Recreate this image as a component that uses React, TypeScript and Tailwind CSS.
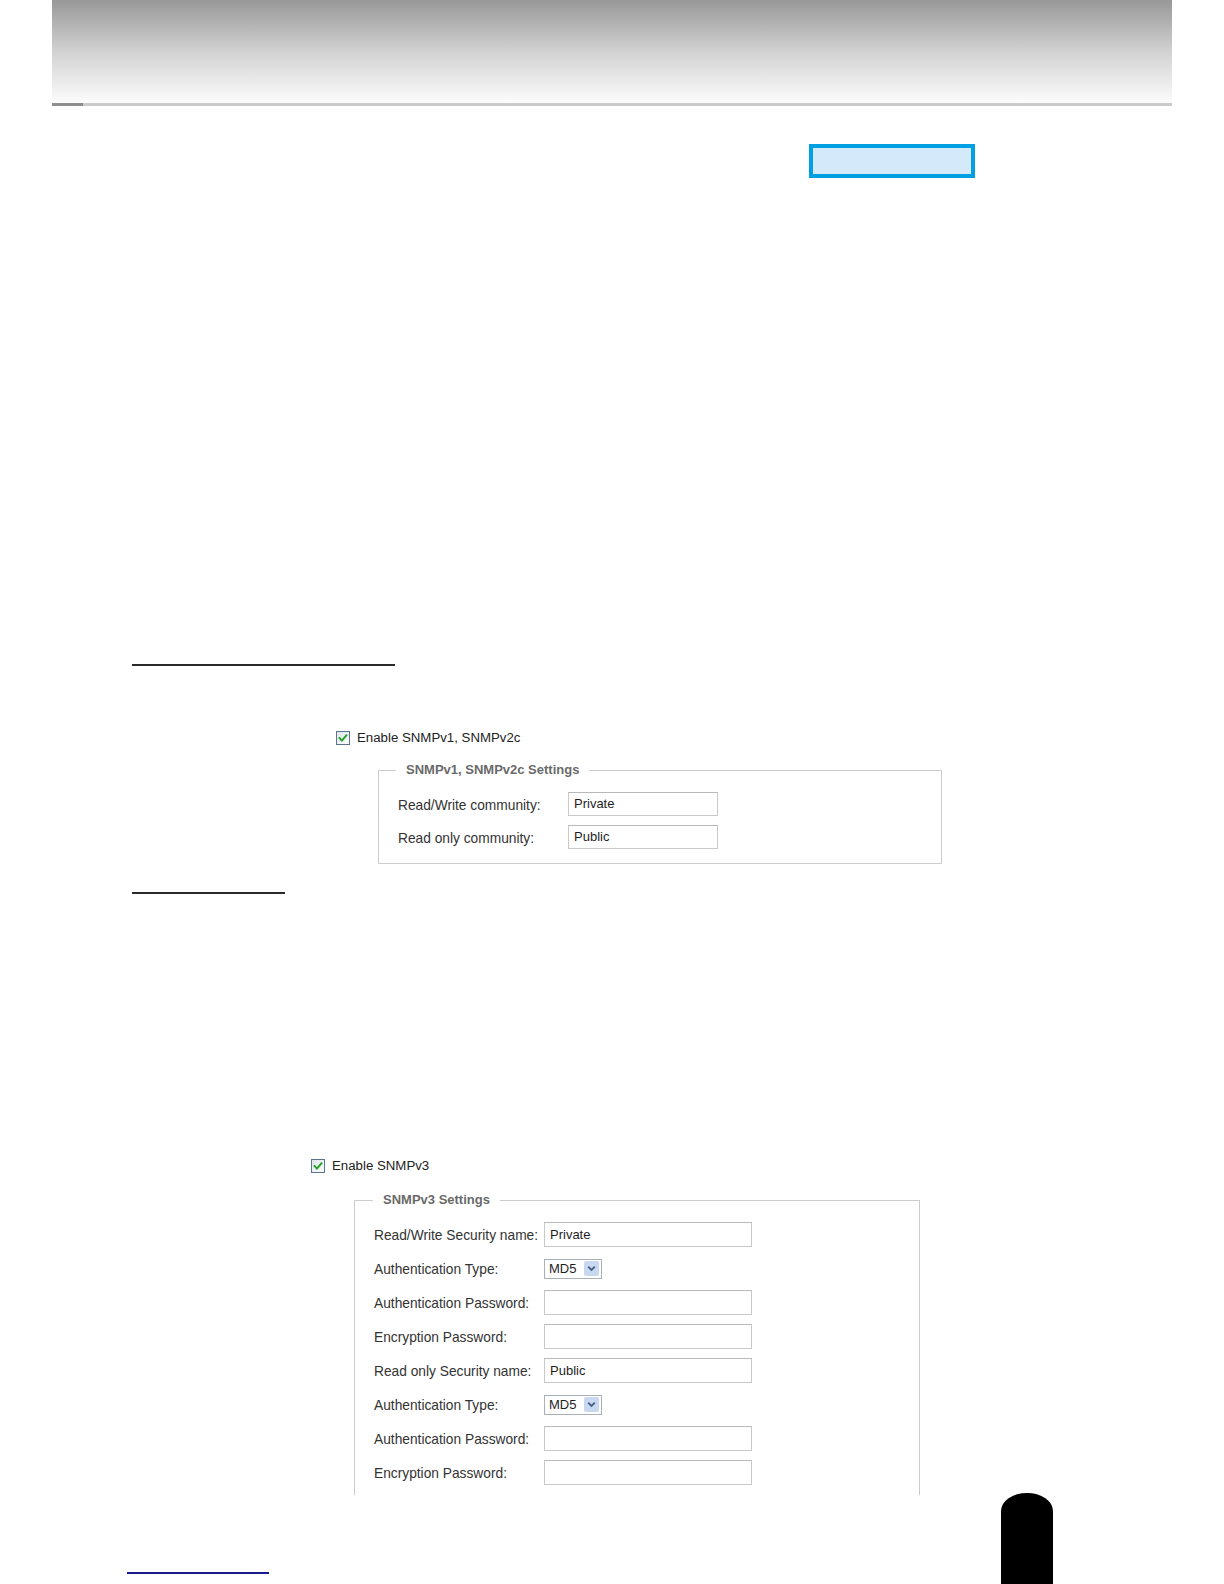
import React from "react";

function CheckBox() {
  return (
    <svg width="14" height="14" viewBox="0 0 14 14" className="shrink-0">
      <defs>
        <linearGradient id="cbg" x1="0" y1="0" x2="1" y2="1">
          <stop offset="0" stopColor="#dfe4ea" />
          <stop offset="1" stopColor="#fbfcfd" />
        </linearGradient>
      </defs>
      <rect x="0.5" y="0.5" width="13" height="13" fill="url(#cbg)" stroke="#5b7590" />
      <path d="M3.4 6.9 L5.9 9.6 L10.6 4.2" stroke="#26a326" strokeWidth="2" fill="none" strokeLinecap="round" strokeLinejoin="round" />
    </svg>
  );
}

function TextBox({ value, w, h }: { value?: string; w: string; h: string }) {
  return (
    <div
      className={`${w} ${h} border border-[#c9c9c9] border-t-[#b9b9b9] bg-white flex items-center pl-[5px] text-[13px] text-[#1e1e1e]`}
    >
      {value}
    </div>
  );
}

function Select() {
  return (
    <div className="w-[58px] h-[20px] border border-[#a9b0b9] bg-white flex items-center justify-between pl-[4px] pr-[2px] text-[13px] text-[#1e1e1e]">
      <span>MD5</span>
      <span className="w-[15px] h-[15px] bg-[#c8d8f1] rounded-[2px] flex items-center justify-center">
        <svg width="9" height="7" viewBox="0 0 9 7">
          <path d="M1.2 1.6 L4.5 4.9 L7.8 1.6" stroke="#4b5f86" strokeWidth="1.9" fill="none" />
        </svg>
      </span>
    </div>
  );
}

function Row1({ label, value }: { label: string; value: string }) {
  return (
    <div className="flex items-center h-[24px]">
      <div className="w-[170px] text-[13.75px] text-[#333] pt-[4px]">{label}</div>
      <TextBox value={value} w="w-[150px]" h="h-[24px]" />
    </div>
  );
}

function Row2({ label, children }: { label: string; children: React.ReactNode }) {
  return (
    <div className="flex items-center h-[25px]">
      <div className="w-[170px] text-[13.75px] text-[#333] pt-[3px]">{label}</div>
      {children}
    </div>
  );
}

export default function App() {
  return (
    <div
      className="w-[1224px] h-[1584px] relative overflow-hidden bg-white"
      style={{ fontFamily: '"Liberation Sans", Arial, sans-serif' }}
    >
      {/* header band */}
      <div className="ml-[52px] w-[1120px]">
        <div className="h-[103px] bg-gradient-to-b from-[#989898] via-[#d2d2d2] to-[#fcfcfc]" />
        <div className="h-[3px] bg-[#cbcbcb] flex">
          <div className="w-[31px] bg-[#8e8e8e]" />
        </div>
      </div>

      {/* blue box */}
      <div className="mt-[38px] ml-[809px] w-[166px] h-[34px] border-[4px] border-[#00a0e3] bg-[#d4e9f9]" />

      {/* underline 1 */}
      <div className="mt-[486px] ml-[132px] w-[263px] h-[2px] bg-[#2a2a2a]" />

      {/* enable v1/v2c */}
      <div className="mt-[64px] ml-[336px] h-[16px] flex items-center gap-[7px]">
        <CheckBox />
        <span className="text-[13.25px] text-[#222]">Enable SNMPv1, SNMPv2c</span>
      </div>

      {/* fieldset 1 */}
      <fieldset className="mt-[16px] ml-[378px] w-[564px] border border-[#cccccc]">
        <legend className="ml-[17px] px-[10px] text-[13px] leading-[16px] font-bold text-[#6a6a6a]">
          SNMPv1, SNMPv2c Settings
        </legend>
        <div className="pl-[19px] pt-[14px] pb-[14px] flex flex-col gap-[9px]">
          <Row1 label="Read/Write community:" value="Private" />
          <Row1 label="Read only community:" value="Public" />
        </div>
      </fieldset>

      {/* underline 2 */}
      <div className="mt-[28px] ml-[132px] w-[153px] h-[2px] bg-[#2a2a2a]" />

      {/* enable v3 */}
      <div className="mt-[264px] ml-[311px] h-[16px] flex items-center gap-[7px]">
        <CheckBox />
        <span className="text-[13.25px] text-[#222]">Enable SNMPv3</span>
      </div>

      {/* fieldset 2 */}
      <fieldset className="mt-[18px] ml-[354px] w-[566px] border border-b-0 border-[#cccccc]">
        <legend className="ml-[18px] px-[10px] text-[13px] leading-[16px] font-bold text-[#6a6a6a]">
          SNMPv3 Settings
        </legend>
        <div className="pl-[19px] pt-[14px] pb-[10px] flex flex-col gap-[9px]">
          <Row2 label="Read/Write Security name:">
            <TextBox value="Private" w="w-[208px]" h="h-[25px]" />
          </Row2>
          <Row2 label="Authentication Type:">
            <Select />
          </Row2>
          <Row2 label="Authentication Password:">
            <TextBox w="w-[208px]" h="h-[25px]" />
          </Row2>
          <Row2 label="Encryption Password:">
            <TextBox w="w-[208px]" h="h-[25px]" />
          </Row2>
          <Row2 label="Read only Security name:">
            <TextBox value="Public" w="w-[208px]" h="h-[25px]" />
          </Row2>
          <Row2 label="Authentication Type:">
            <Select />
          </Row2>
          <Row2 label="Authentication Password:">
            <TextBox w="w-[208px]" h="h-[25px]" />
          </Row2>
          <Row2 label="Encryption Password:">
            <TextBox w="w-[208px]" h="h-[25px]" />
          </Row2>
        </div>
      </fieldset>

      {/* bottom link underline */}
      <div className="mt-[77px] ml-[127px] w-[142px] h-[2px] bg-[#1a1a8e]" />

      {/* page tab */}
      <div className="absolute left-[1001px] top-[1493px] w-[52px] h-[91px] bg-black rounded-tl-[26px_18px] rounded-tr-[26px_18px]" />
    </div>
  );
}
